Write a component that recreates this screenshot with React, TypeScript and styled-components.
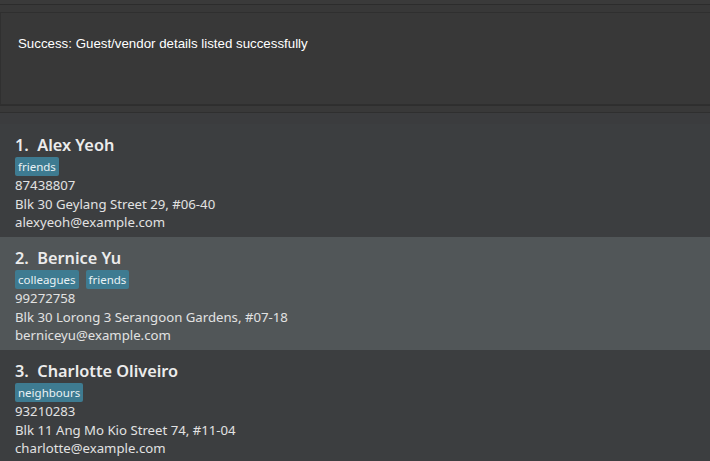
import React from 'react';
import styled, { createGlobalStyle } from 'styled-components';

const GlobalStyle = createGlobalStyle`
  html, body {
    margin: 0;
    padding: 0;
    width: 710px;
    height: 461px;
    overflow: hidden;
    background: #383838;
  }
`;

interface Person {
  name: string;
  tags: string[];
  phone: string;
  address: string;
  email: string;
}

const persons: Person[] = [
  {
    name: 'Alex Yeoh',
    tags: ['friends'],
    phone: '87438807',
    address: 'Blk 30 Geylang Street 29, #06-40',
    email: 'alexyeoh@example.com',
  },
  {
    name: 'Bernice Yu',
    tags: ['colleagues', 'friends'],
    phone: '99272758',
    address: 'Blk 30 Lorong 3 Serangoon Gardens, #07-18',
    email: 'berniceyu@example.com',
  },
  {
    name: 'Charlotte Oliveiro',
    tags: ['neighbours'],
    phone: '93210283',
    address: 'Blk 11 Ang Mo Kio Street 74, #11-04',
    email: 'charlotte@example.com',
  },
];

const Window = styled.div`
  width: 710px;
  height: 461px;
  display: flex;
  flex-direction: column;
  background: #383838;
  overflow: hidden;
`;

const CommandStrip = styled.div`
  flex-shrink: 0;
  height: 4px;
  background: #3a3a3a;
  border-bottom: 1px solid #2c2c2c;
`;

const ResultWrap = styled.div`
  flex-shrink: 0;
  padding: 7px 0 0;
  border-bottom: 1px solid #2e2e2e;
`;

const ResultBox = styled.div`
  height: 93px;
  border-top: 1px solid #2f2f2f;
  border-left: 1px solid #303030;
  border-bottom: 1px solid #2f2f2f;
  background: #383838;
  box-sizing: border-box;
  padding: 23px 17px;
`;

const ResultText = styled.p`
  margin: 0;
  font-family: 'Liberation Sans', Arial, sans-serif;
  font-size: 13.3px;
  color: #ffffff;
`;

const Gap = styled.div`
  flex-shrink: 0;
  height: 6px;
  background: #393939;
  border-bottom: 1px solid #2f2f2f;
`;

const List = styled.div`
  flex: 1 0 auto;
  padding-top: 11px;
  background: #3b3c3e;
`;

const Card = styled.div<{ $alt: boolean }>`
  height: 113px;
  box-sizing: border-box;
  padding: 10px 15px 0;
  background: ${(p) => (p.$alt ? '#515658' : '#3c3e40')};
  font-family: 'Noto Sans', 'Open Sans', sans-serif;
  color: #e6e6e6;
`;

const Name = styled.div`
  font-size: 16.3px;
  font-weight: 600;
  color: #ececec;
  line-height: 22px;
  white-space: pre;
`;

const TagRow = styled.div`
  display: flex;
  gap: 7px;
  margin: 1px 0 0;
`;

const Tag = styled.span`
  background: #3e7b91;
  color: #eaf2f5;
  font-size: 11.5px;
  line-height: 17px;
  height: 19px;
  box-sizing: border-box;
  padding: 1px 3px;
  border-radius: 2px;
`;

const Line = styled.div`
  font-size: 13.2px;
  line-height: 18.5px;
  color: #e2e2e2;
`;

export default function App() {
  return (
    <Window>
      <GlobalStyle />
      <CommandStrip />
      <ResultWrap>
        <ResultBox>
          <ResultText>Success: Guest/vendor details listed successfully</ResultText>
        </ResultBox>
      </ResultWrap>
      <Gap />
      <List>
        {persons.map((p, i) => (
          <Card key={p.name} $alt={i % 2 === 1}>
            <Name>{`${i + 1}.  ${p.name}`}</Name>
            <TagRow>
              {p.tags.map((t) => (
                <Tag key={t}>{t}</Tag>
              ))}
            </TagRow>
            <Line>{p.phone}</Line>
            <Line>{p.address}</Line>
            <Line>{p.email}</Line>
          </Card>
        ))}
      </List>
    </Window>
  );
}
